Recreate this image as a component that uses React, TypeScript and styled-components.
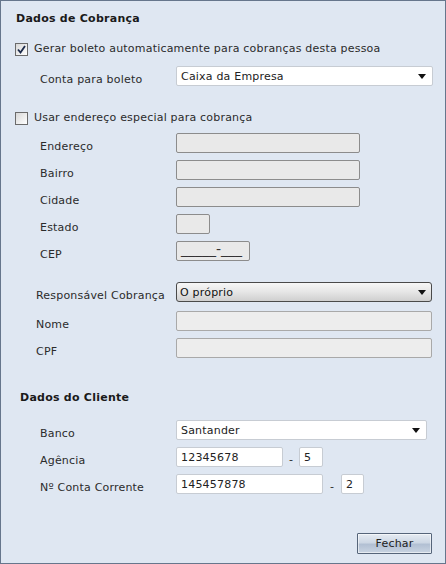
import React from "react";
import styled, { createGlobalStyle } from "styled-components";

const Global = createGlobalStyle`
  html, body { margin: 0; padding: 0; background: #dfe7f2; }
  * { box-sizing: border-box; }
`;

const Window = styled.div`
  width: 446px;
  height: 564px;
  border: 1px solid #66768c;
  background: #dfe7f2;
  font-family: "DejaVu Sans", Verdana, sans-serif;
  font-size: 11px;
  letter-spacing: 0.2px;
  color: #2b2b2b;
  display: flex;
  flex-direction: column;
  padding: 0 0 0 14px;
`;

const Title = styled.div<{ $mt: number; $ml: number }>`
  margin-top: ${(p) => p.$mt}px;
  margin-left: ${(p) => p.$ml}px;
  font-weight: bold;
  font-size: 11px;
  letter-spacing: 0.25px;
  height: 14px;
  line-height: 14px;
  color: #1a1a1a;
`;

const CheckRow = styled.label<{ $mt: number }>`
  margin-top: ${(p) => p.$mt}px;
  display: flex;
  align-items: center;
  gap: 6px;
  height: 14px;
  line-height: 14px;
`;

const Box = styled.span`
  width: 13px;
  height: 13px;
  border: 1px solid #6b6b6b;
  background: linear-gradient(135deg, #d8d8d8, #ffffff);
  display: flex;
  align-items: center;
  justify-content: center;
  flex: none;
`;

const Row = styled.div<{ $mt: number; $indent: number }>`
  margin-top: ${(p) => p.$mt}px;
  display: flex;
  align-items: center;
  height: 20px;
  padding-left: ${(p) => p.$indent}px;
`;

const Label = styled.span<{ $w: number }>`
  width: ${(p) => p.$w}px;
  flex: none;
  padding-top: 7px;
  white-space: nowrap;
`;

const Field = styled.div<{ $w: number; $tone: "white" | "dim" | "soft" }>`
  width: ${(p) => p.$w}px;
  height: 100%;
  flex: none;
  border-radius: 2px;
  border: 1px solid
    ${(p) => (p.$tone === "white" ? "#c7ccd3" : p.$tone === "dim" ? "#8c8c8c" : "#a9a9a9")};
  background: ${(p) => (p.$tone === "white" ? "#ffffff" : p.$tone === "dim" ? "#e9e9e9" : "#ededed")};
  display: flex;
  align-items: center;
  padding-left: 4px;
  color: #222;
  overflow: hidden;
`;

const Select = styled(Field)<{ $arrowPad: number }>`
  justify-content: space-between;
  padding-right: ${(p) => p.$arrowPad}px;
`;

const RaisedSelect = styled.div<{ $w: number }>`
  width: ${(p) => p.$w}px;
  height: 100%;
  flex: none;
  border-radius: 3px;
  border: 1px solid #4a4a4a;
  background: linear-gradient(#f7f7f7, #e6e6e6 50%, #cfcfcf);
  display: flex;
  align-items: center;
  justify-content: space-between;
  padding: 0 5px 0 3px;
  color: #111;
`;

const Arrow = styled.span`
  width: 0;
  height: 0;
  border-left: 4px solid transparent;
  border-right: 4px solid transparent;
  border-top: 5px solid #111;
`;

const Dash = styled.span<{ $w: number }>`
  width: ${(p) => p.$w}px;
  text-align: center;
  flex: none;
  padding-top: 4px;
`;

const Mask = styled.span`
  font-size: 14px;
  letter-spacing: 0;
  line-height: 14px;
  color: #333;
  margin-top: -5px;
`;

const Footer = styled.div`
  margin-top: auto;
  margin-bottom: 9px;
  display: flex;
  justify-content: flex-end;
  padding-right: 13px;
`;

const Button = styled.button`
  width: 75px;
  height: 21px;
  border: 1px solid #56657a;
  border-radius: 1px;
  background: linear-gradient(#e6ecf3, #cdd7e4 45%, #b2c0d3 55%, #c9d4e2);
  font-family: "DejaVu Sans", Verdana, sans-serif;
  font-size: 11px;
  letter-spacing: 0.2px;
  color: #222;
  padding: 0;
  box-shadow: inset 0 0 0 1px rgba(255, 255, 255, 0.55);
`;

const Check = () => (
  <svg width="9" height="9" viewBox="0 0 9 9">
    <path d="M1 4.5 L3.5 7.5 L8 1" fill="none" stroke="#1b2a4a" strokeWidth="1.8" />
  </svg>
);

export default function App() {
  return (
    <>
      <Global />
      <Window>
        <Title $mt={11} $ml={1}>Dados de Cobrança</Title>
        <CheckRow $mt={16}>
          <Box>
            <Check />
          </Box>
          Gerar boleto automaticamente para cobranças desta pessoa
        </CheckRow>
        <Row $mt={10} $indent={25}>
          <Label $w={136}>Conta para boleto</Label>
          <Select $w={257} $tone="white" $arrowPad={6}>
            Caixa da Empresa
            <Arrow />
          </Select>
        </Row>
        <CheckRow $mt={25}>
          <Box />
          Usar endereço especial para cobrança
        </CheckRow>
        <Row $mt={8} $indent={25}>
          <Label $w={136}>Endereço</Label>
          <Field $w={184} $tone="dim" />
        </Row>
        <Row $mt={7} $indent={25}>
          <Label $w={136}>Bairro</Label>
          <Field $w={184} $tone="dim" />
        </Row>
        <Row $mt={7} $indent={25}>
          <Label $w={136}>Cidade</Label>
          <Field $w={184} $tone="dim" />
        </Row>
        <Row $mt={7} $indent={25}>
          <Label $w={136}>Estado</Label>
          <Field $w={34} $tone="dim" />
        </Row>
        <Row $mt={7} $indent={25}>
          <Label $w={136}>CEP</Label>
          <Field $w={74} $tone="dim">
            <Mask>_____-___</Mask>
          </Field>
        </Row>
        <Row $mt={21} $indent={21}>
          <Label $w={140}>Responsável Cobrança</Label>
          <RaisedSelect $w={256}>
            O próprio
            <Arrow />
          </RaisedSelect>
        </Row>
        <Row $mt={9} $indent={21}>
          <Label $w={140}>Nome</Label>
          <Field $w={256} $tone="soft" />
        </Row>
        <Row $mt={7} $indent={21}>
          <Label $w={140}>CPF</Label>
          <Field $w={256} $tone="soft" />
        </Row>
        <Title $mt={33} $ml={5}>Dados do Cliente</Title>
        <Row $mt={15} $indent={25}>
          <Label $w={136}>Banco</Label>
          <Select $w={251} $tone="white" $arrowPad={6}>
            Santander
            <Arrow />
          </Select>
        </Row>
        <Row $mt={7} $indent={25}>
          <Label $w={136}>Agência</Label>
          <Field $w={107} $tone="white">12345678</Field>
          <Dash $w={16}>-</Dash>
          <Field $w={24} $tone="white">5</Field>
        </Row>
        <Row $mt={7} $indent={25}>
          <Label $w={136}>Nº Conta Corrente</Label>
          <Field $w={147} $tone="white">145457878</Field>
          <Dash $w={18}>-</Dash>
          <Field $w={23} $tone="white">2</Field>
        </Row>
        <Footer>
          <Button>Fechar</Button>
        </Footer>
      </Window>
    </>
  );
}
